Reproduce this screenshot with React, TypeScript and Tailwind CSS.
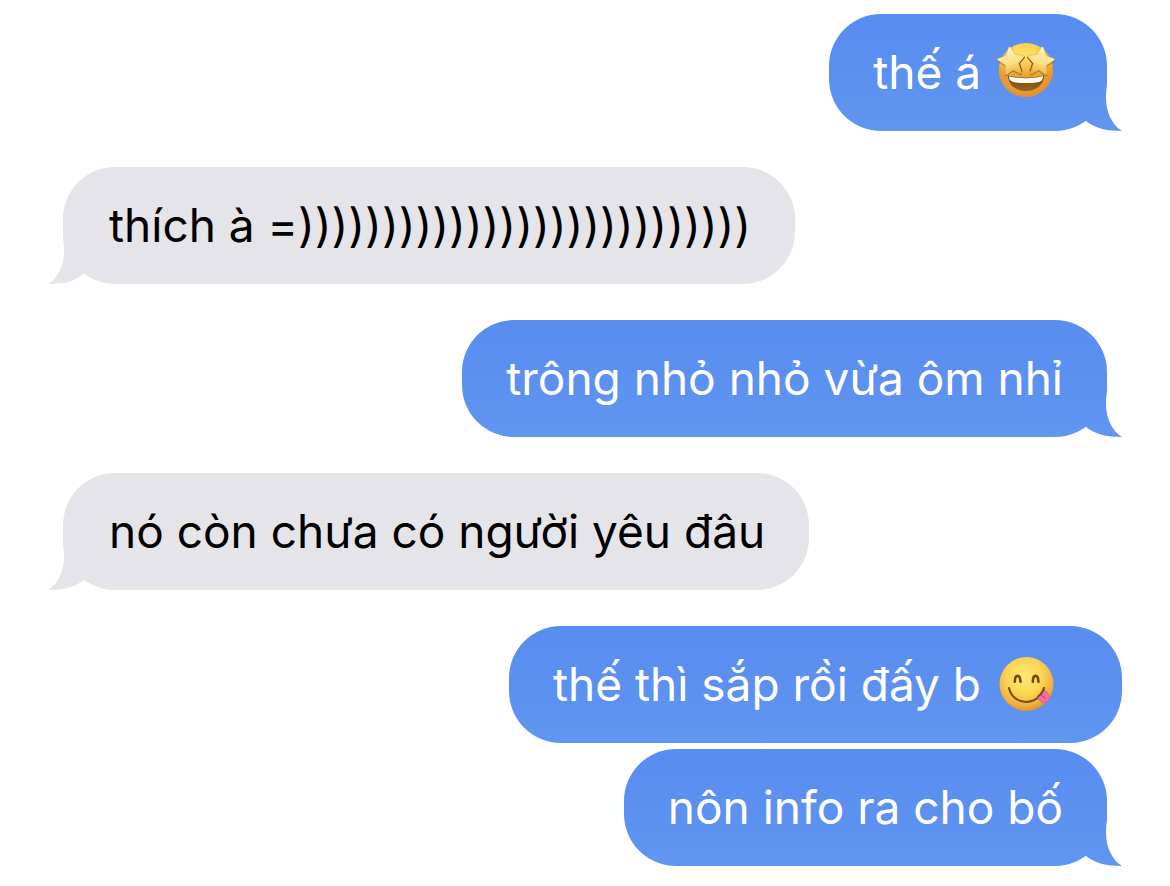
import { clsx } from 'clsx';

type Message = {
  id: number;
  text: string;
  mine: boolean;
  emoji?: 'starstruck' | 'yum';
  tail: boolean;
};

const messages: Message[] = [
  { id: 1, text: 'thế á', emoji: 'starstruck', mine: true, tail: true },
  { id: 2, text: 'thích à =)))))))))))))))))))))))))))', mine: false, tail: true },
  { id: 3, text: 'trông nhỏ nhỏ vừa ôm nhỉ', mine: true, tail: true },
  { id: 4, text: 'nó còn chưa có người yêu đâu', mine: false, tail: true },
  { id: 5, text: 'thế thì sắp rồi đấy b', emoji: 'yum', mine: true, tail: false },
  { id: 6, text: 'nôn info ra cho bố', mine: true, tail: true },
];

const star =
  'M11.4 4.6Q12.6 2.8 14 4.6L18.4 11.6 26 12.2Q28.2 12.6 26.8 14.4L21.8 20.4 24.9 29.6Q25.2 31.8 23 31L16 27.2 10 31.8Q7.8 33 7.8 30.6L8.4 22.6 1 17.6Q-0.6 16 1.6 15.2L8.6 12.8Z';

function EmojiDefs({ id }: { id: string }) {
  return (
    <defs>
      <radialGradient id={`${id}-face`} cx="0.46" cy="0.36" r="0.66">
        <stop offset="0" stopColor="#ffe873" />
        <stop offset="0.5" stopColor="#fbd654" />
        <stop offset="0.82" stopColor="#efb03f" />
        <stop offset="1" stopColor="#dc8d2e" />
      </radialGradient>
      <linearGradient id={`${id}-shade`} x1="0" y1="0" x2="0" y2="1">
        <stop offset="0.25" stopColor="#e98a2a" stopOpacity="0" />
        <stop offset="0.62" stopColor="#e98a2a" stopOpacity="0.75" />
        <stop offset="1" stopColor="#e98a2a" stopOpacity="0.55" />
      </linearGradient>
      <linearGradient id={`${id}-star`} x1="0.2" y1="0" x2="0.5" y2="1">
        <stop offset="0" stopColor="#fff4c4" />
        <stop offset="0.6" stopColor="#fbe184" />
        <stop offset="1" stopColor="#e8b23a" />
      </linearGradient>
      <linearGradient id={`${id}-mouth`} x1="0" y1="0" x2="0" y2="1">
        <stop offset="0" stopColor="#6f4310" />
        <stop offset="1" stopColor="#9a661c" />
      </linearGradient>
    </defs>
  );
}

function StarStruck() {
  return (
    <svg viewBox="0 0 58 58" className="size-[58px] shrink-0 overflow-visible" role="img" aria-label="🤩">
      <EmojiDefs id="starstruck" />
      <circle cx="29" cy="27" r="27" fill="url(#starstruck-face)" />
      <circle cx="29" cy="27" r="27" fill="url(#starstruck-shade)" />
      <path d="M11 32.5Q29 37 47 32.5C47 42 39 48 29 48S11 42 11 32.5Z" fill="url(#starstruck-mouth)" />
      <path d="M12 33.2Q29 37.5 46 33.2C46 38.5 43 40 29 40S12 38.5 12 33.2Z" fill="#fffdf6" />
      {/* shadow under each star, then the star itself */}
      <path d={star} transform="translate(0 1)" fill="#8a5512" opacity="0.8" />
      <path d={star} transform="translate(58 1) scale(-1 1)" fill="#8a5512" opacity="0.8" />
      <path d="M26.8 14.4 21.8 20.4 24.3 28M31.2 14.4 36.2 20.4 33.7 28" fill="none" stroke="#744509" strokeWidth="2.2" strokeLinecap="round" />
      <path d={star} fill="url(#starstruck-star)" stroke="#c9912f" strokeWidth="0.4" />
      <path d={star} transform="translate(58 0) scale(-1 1)" fill="url(#starstruck-star)" stroke="#c9912f" strokeWidth="0.4" />
    </svg>
  );
}

function Yum() {
  return (
    <svg viewBox="0 0 58 58" className="size-[58px] shrink-0 overflow-visible" role="img" aria-label="😋">
      <EmojiDefs id="yum" />
      <circle cx="29.5" cy="29" r="27" fill="url(#yum-face)" />
      <path
        d="M17.8 26.6C18 19 23 19 23.5 26.6M35.8 26.6C36 19 41 19 41.5 26.6"
        fill="none"
        stroke="#70480f"
        strokeWidth="2.6"
        strokeLinecap="round"
      />
      <path d="M12 33C16 51.5 42 51.500 47 33" fill="none" stroke="#7a4d10" strokeWidth="2" strokeLinecap="round" />
      <path
        d="M40.5 41.5C43.500 39.5 46 37.5 47 35.5C49.5 35.5 51.5 38.5 52.6 41.5C53.200 45 50 48 46.500 47.6C43.5 47 41.5 44.5 40.5 41.500Z"
        fill="#f26fa4"
        stroke="#dc5089"
        strokeWidth="0.8"
      />
      <path d="M44.8 40.5 48 43.2" stroke="#d0457c" strokeWidth="1.2" strokeLinecap="round" />
      <path d="M41 41.5Q45.8 38 47 33" fill="none" stroke="#7a4d10" strokeWidth="2" strokeLinecap="round" />
    </svg>
  );
}

function Tail({ id, mine }: { id: number; mine: boolean }) {
  return (
    <svg
      viewBox="0 0 36 52"
      aria-hidden="true"
      className={clsx(
        'absolute bottom-0 h-[52px] w-9',
        mine ? '-right-[15px]' : '-left-[15px] -scale-x-100',
      )}
    >
      <linearGradient id={`tail-${id}`} x1="0" y1="0" x2="0" y2="1">
        <stop offset="0" stopColor={mine ? '#5c91f0' : '#e5e4e9'} />
        <stop offset="1" stopColor={mine ? '#6095f0' : '#e5e4e9'} />
      </linearGradient>
      <path d="M0 0H21C21 8 20 11 20 19C20 33 26 46 36 52C20 52 9 49 0 42Z" fill={`url(#tail-${id})`} />
    </svg>
  );
}

function Bubble({ message }: { message: Message }) {
  const { id, text, mine, emoji, tail } = message;

  return (
    <li
      className={clsx(
        'relative flex min-h-[117px] items-center gap-4 rounded-[52px] pt-[22px] pb-6 text-[46px] leading-[48px]',
        mine
          ? 'self-end bg-linear-to-b from-[#588cf0] to-[#6095f0] pl-11 text-white'
          : 'self-start bg-[#e5e4e9] pl-[46px] text-black',
        emoji ? (tail ? 'pr-[52px]' : 'pr-[67px]') : 'pr-11',
        tail && (mine ? 'mr-[15px]' : 'ml-[15px]'),
        // consecutive messages from the same side sit closer together
        id === 1 ? 'mt-0' : id === 6 ? 'mt-[6px]' : 'mt-9',
      )}
    >
      <p>{text}</p>
      {emoji === 'starstruck' && <StarStruck />}
      {emoji === 'yum' && <Yum />}
      {tail && <Tail id={id} mine={mine} />}
    </li>
  );
}

export default function App() {
  return (
    <main className="min-h-screen bg-white px-12 pt-[14px] pb-5 font-['Inter',sans-serif]">
      <ul className="flex flex-col">
        {messages.map((message) => (
          <Bubble key={message.id} message={message} />
        ))}
      </ul>
    </main>
  );
}
